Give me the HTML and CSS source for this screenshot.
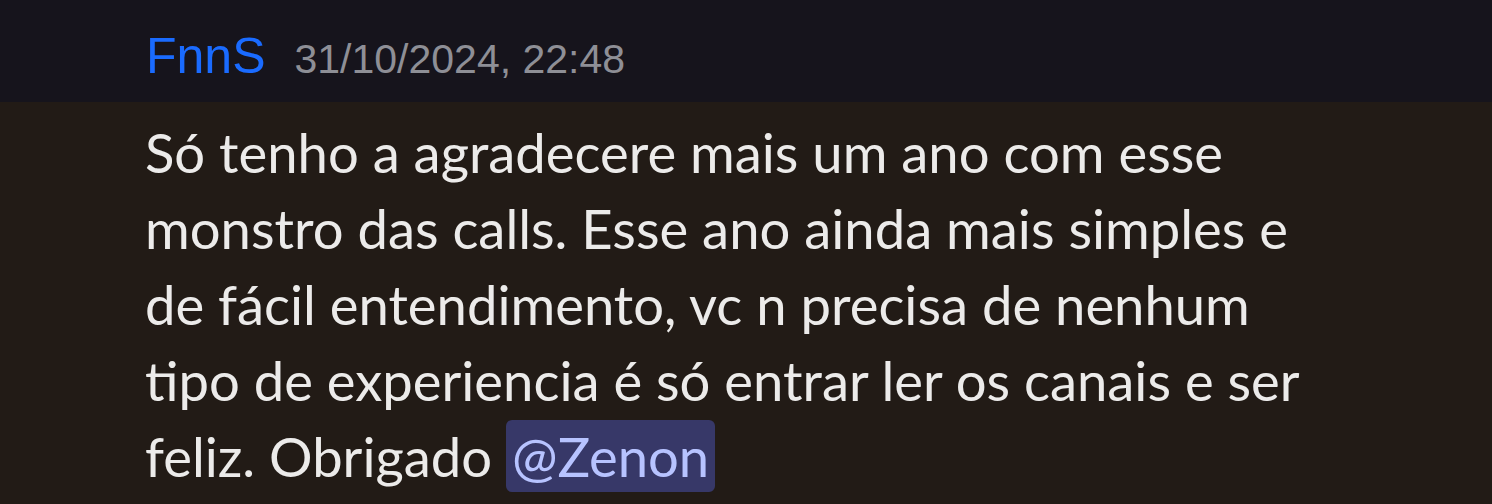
FILE: index.html
```html
<!DOCTYPE html>
<html lang="pt">
<head>
  <meta charset="UTF-8" />
  <title>Mensagem</title>
  <link rel="stylesheet" href="styles.css">
</head>
<body>
  <!-- cabeçalho da mensagem -->
  <div class="msg-header">
    <span class="author">FnnS</span>
    <span class="timestamp">31/10/2024, 22:48</span>
  </div>

  <!-- corpo -->
  <div class="msg-body">
    <p class="msg-text">Só tenho a agradecere mais um ano com esse monstro das calls. Esse ano ainda mais simples e de fácil entendimento, vc n precisa de nenhum tipo de experiencia é só entrar ler os canais e ser feliz. Obrigado <span class="mention">@Zenon</span></p>
  </div>
</body>
</html>
```

FILE: styles.css
```css
body {
  margin: 0;
  background-color: #221b16;
  height: 100vh;
  overflow: hidden;
}

.msg-header {
  height: 92px;
  padding-top: 10px;
  background: #16141c;
  display: flex;
  align-items: center;
  padding-left: 146px;
  font-family: 'Liberation Sans', Arial, sans-serif;
}

.author {
  color: #1a6bff;
  font-size: 50px;
  margin-right: 29px;
}

.timestamp {
  color: #8e8f96;
  font-size: 41px;
  margin-top: 6px;
}

.msg-body {
  padding: 0 0 0 145px;
}

.msg-text {
  margin: 0;
  padding-top: 12px;
  width: 1162px;
  font-family: 'Lato', sans-serif;
  font-size: 54.4px;
  line-height: 76px;
  color: #ecebea;
}

.mention {
  display: inline-block;
  line-height: 72px;
  background: #373868;
  color: #b7c3ff;
  border-radius: 6px;
  padding: 0 6px;
}
```
